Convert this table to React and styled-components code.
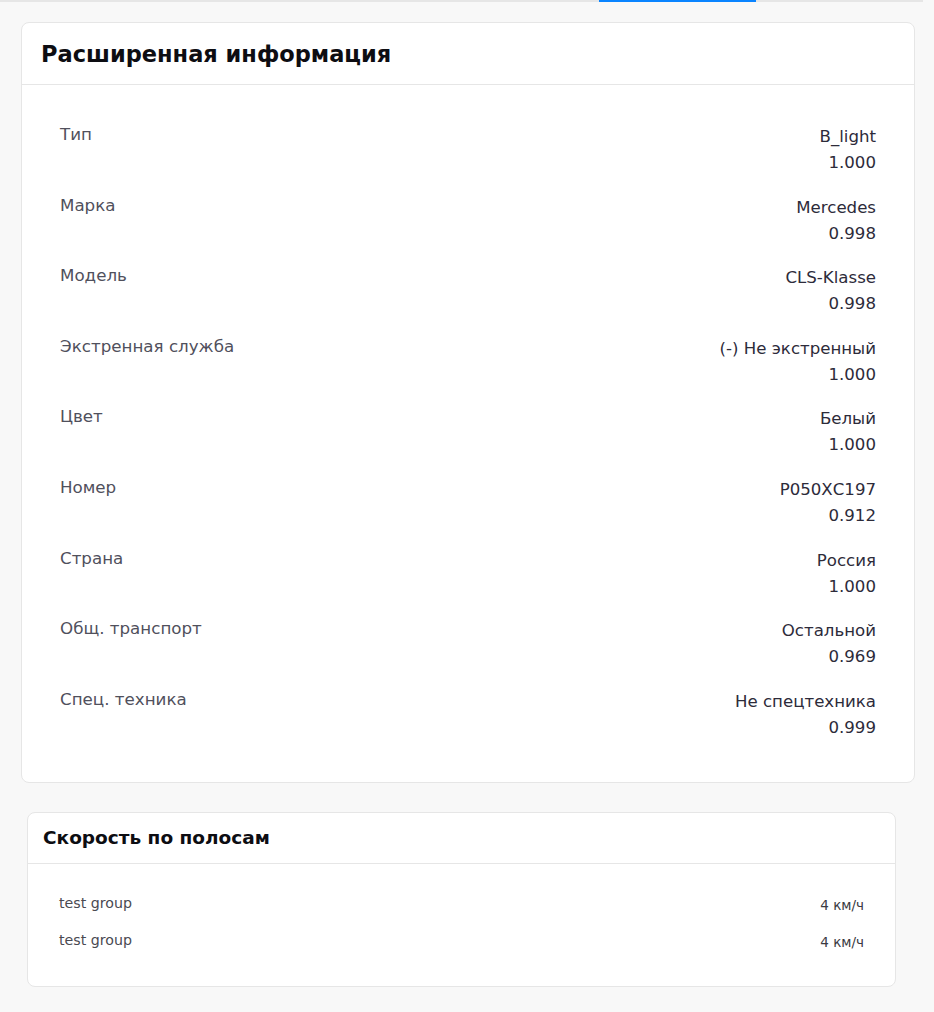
import React from 'react';
import styled, { createGlobalStyle } from 'styled-components';

const GlobalStyle = createGlobalStyle`
  html, body {
    margin: 0;
    padding: 0;
    background: #f8f8f8;
    font-family: "DejaVu Sans", "Noto Sans", Arial, sans-serif;
  }
`;

const Page = styled.div`
  width: 934px;
  min-height: 1012px;
  box-sizing: border-box;
`;

const TabLine = styled.div`
  height: 2px;
  width: 923px;
  background: #e6e6e6;
  display: flex;
`;

const ActiveTab = styled.div`
  margin-left: 599px;
  width: 157px;
  height: 2px;
  background: #0a84ff;
`;

const Content = styled.div`
  display: flex;
  flex-direction: column;
  gap: 29px;
  padding: 20px 19px 26px 21px;
`;

const Card = styled.section`
  background: #fff;
  border: 1px solid #e6e6e6;
  border-radius: 8px;
  margin: ${p => p.$inset ? '0 19px 0 6px' : '0'};
`;

const CardHeader = styled.header`
  height: ${p => p.$small ? '50px' : '61px'};
  display: flex;
  align-items: center;
  padding-left: ${p => p.$small ? '15px' : '19px'};
  border-bottom: 1px solid #e6e6e6;
`;

const Title = styled.h2`
  margin: 0;
  font-size: ${p => p.$small ? '18.5px' : '22.5px'};
  font-weight: 600;
  color: #0d0d12;
`;

const InfoList = styled.div`
  padding: 39px 38px 41px 38px;
  display: flex;
  flex-direction: column;
  gap: 18.6px;
`;

const InfoRow = styled.div`
  display: flex;
  justify-content: space-between;
  align-items: flex-start;
`;

const Label = styled.div`
  font-size: 16.7px;
  line-height: 26px;
  color: #50505c;
  margin-top: -3px;
`;

const Value = styled.div`
  text-align: right;
  font-size: 16.6px;
  line-height: 26px;
  color: #2d2b3a;
`;

const SpeedList = styled.div`
  padding: 27px 31px 32px 31px;
  display: flex;
  flex-direction: column;
  gap: 11px;
`;

const SpeedRow = styled.div`
  display: flex;
  justify-content: space-between;
  align-items: center;
  font-size: 14.2px;
  line-height: 23px;
  color: #4a4a52;
`;

const SpeedValue = styled.span`
  margin-top: 3px;
  font-size: 13.5px;
  color: #3a3a42;
`;

const info = [
  ['Тип', 'B_light', '1.000'],
  ['Марка', 'Mercedes', '0.998'],
  ['Модель', 'CLS-Klasse', '0.998'],
  ['Экстренная служба', '(-) Не экстренный', '1.000'],
  ['Цвет', 'Белый', '1.000'],
  ['Номер', 'Р050ХС197', '0.912'],
  ['Страна', 'Россия', '1.000'],
  ['Общ. транспорт', 'Остальной', '0.969'],
  ['Спец. техника', 'Не спецтехника', '0.999'],
];

const speeds = [
  ['test group', '4 км/ч'],
  ['test group', '4 км/ч'],
];

export default function App() {
  return (
    <Page>
      <GlobalStyle />
      <TabLine>
        <ActiveTab />
      </TabLine>
      <Content>
        <Card>
          <CardHeader>
            <Title>Расширенная информация</Title>
          </CardHeader>
          <InfoList>
            {info.map(([label, value, score]) => (
              <InfoRow key={label}>
                <Label>{label}</Label>
                <Value>
                  <div>{value}</div>
                  <div>{score}</div>
                </Value>
              </InfoRow>
            ))}
          </InfoList>
        </Card>
        <Card $inset>
          <CardHeader $small>
            <Title $small>Скорость по полосам</Title>
          </CardHeader>
          <SpeedList>
            {speeds.map(([name, speed], i) => (
              <SpeedRow key={i}>
                <span>{name}</span>
                <SpeedValue>{speed}</SpeedValue>
              </SpeedRow>
            ))}
          </SpeedList>
        </Card>
      </Content>
    </Page>
  );
}
